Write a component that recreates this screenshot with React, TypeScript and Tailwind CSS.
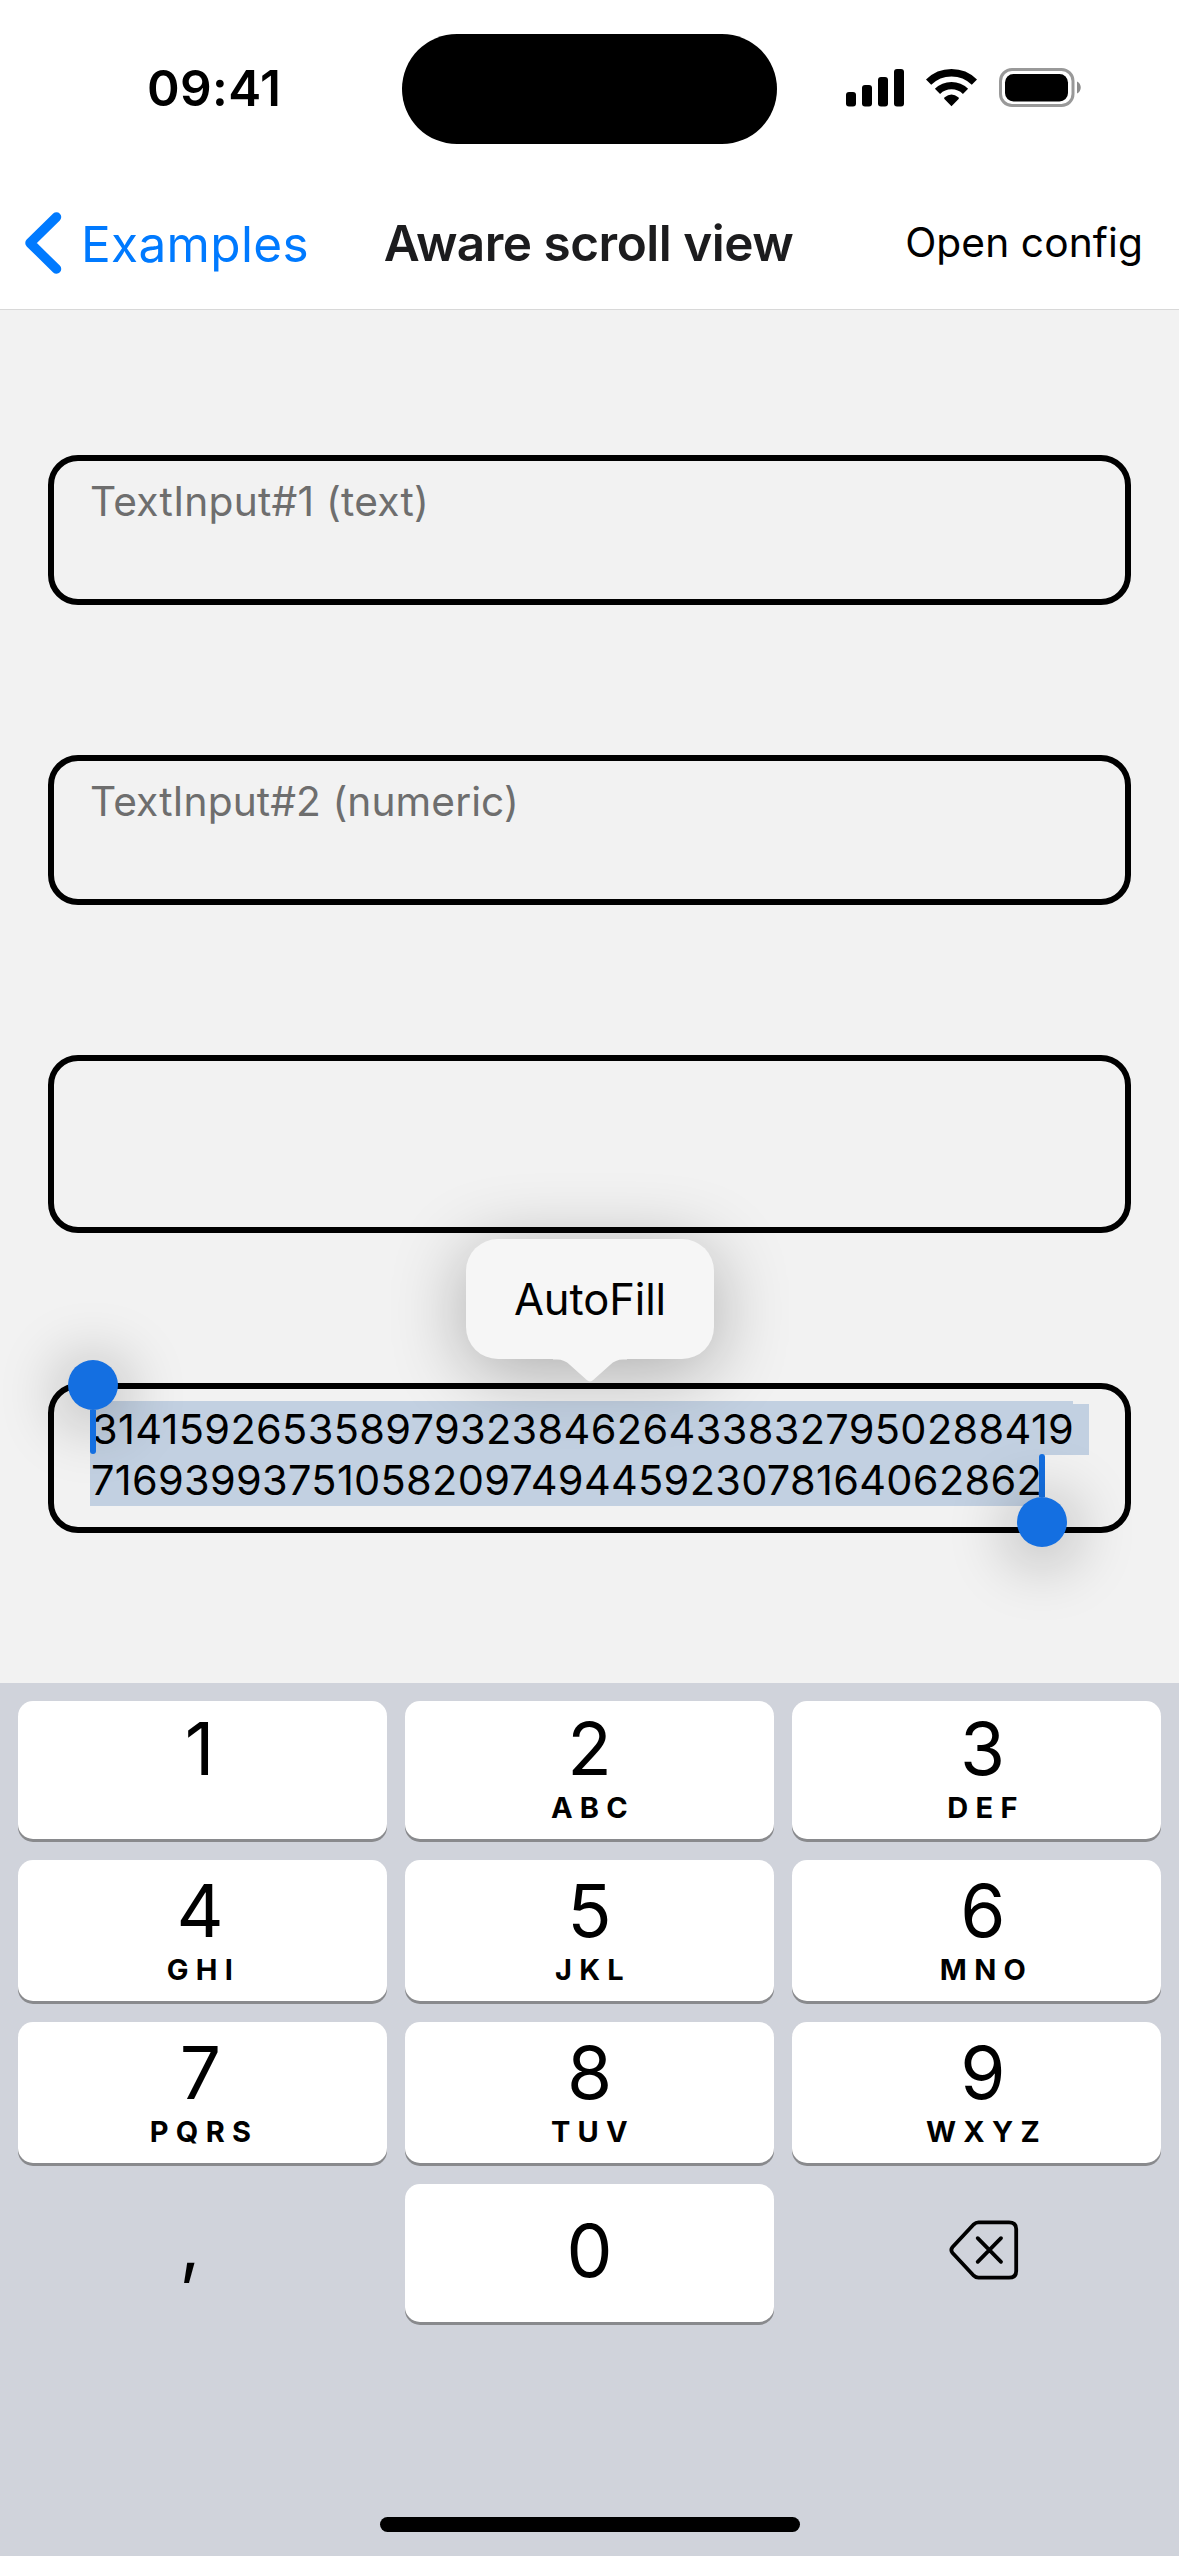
import type { ReactNode } from "react";

const DIGITS_ROW_1 = "314159265358979323846264338327950288419";
const DIGITS_ROW_2 = "71693993751058209749445923078164062862";

function SignalIcon() {
  return (
    <svg width="59" height="38" viewBox="0 0 59 38" fill="black">
      <rect x="0" y="23" width="10" height="14.5" rx="3" />
      <rect x="16" y="16" width="10" height="21.5" rx="3" />
      <rect x="32" y="8" width="10" height="29.5" rx="3" />
      <rect x="48" y="0" width="10" height="37.5" rx="3" />
    </svg>
  );
}

function WifiIcon() {
  return (
    <svg width="51" height="38" viewBox="0 0 51 38" fill="none">
      <path d="M2.6 13.2A32.6 32.6 0 0 1 48.4 13.2" stroke="black" strokeWidth="7.4" />
      <path d="M11.5 22.3A20 20 0 0 1 39.5 22.3" stroke="black" strokeWidth="7.4" />
      <path
        d="M25.5 37.2L18.4 30Q17.6 29 18.7 28.2Q25.5 22.8 32.3 28.2Q33.4 29 32.6 30Z"
        fill="black"
      />
    </svg>
  );
}

function BatteryIcon() {
  return (
    <svg width="83" height="40" viewBox="0 0 83 40">
      <rect x="1.5" y="1.5" width="72.5" height="36" rx="11.5" fill="none" stroke="#999999" strokeWidth="3" />
      <rect x="6" y="6" width="63" height="27.5" rx="8.5" fill="black" />
      <path d="M78 13.5C83 15.5 83 23.5 78 25.5Z" fill="#8c8c8c" />
    </svg>
  );
}

function DeleteIcon() {
  return (
    <svg width="70" height="60" viewBox="0 0 70 60" fill="none" stroke="black" strokeWidth="3.8" strokeLinecap="round" strokeLinejoin="round">
      <path d="M29.5 2.3H60Q67.2 2.3 67.2 9V51Q67.2 57.7 60 57.7H29.5Q26.8 57.7 24.8 55.7L3.6 33Q1.1 30 3.6 27L24.8 4.3Q26.8 2.3 29.5 2.3Z" />
      <path d="M28.7 18.2L52 41.8M52 18.2L28.7 41.8" />
    </svg>
  );
}

function StatusBar() {
  return (
    <div className="grid h-[177px] grid-cols-[402px_375px_402px] items-center bg-white">
      <div className="pb-[2px] pl-[147px] text-[49.5px] leading-[60px] font-semibold tracking-[0.35px]">09:41</div>
      <div className="mt-px h-[110px] rounded-full bg-black" />
      <div className="flex items-center pb-px pl-[69px]">
        <SignalIcon />
        <div className="w-[21px]" />
        <WifiIcon />
        <div className="w-[22px]" />
        <BatteryIcon />
      </div>
    </div>
  );
}

function NavBar() {
  return (
    <div className="grid h-[133px] grid-cols-[1fr_auto_1fr] items-center border-b border-[#d8d8d8] bg-white">
      <div className="flex items-center pl-[24px] text-[#007aff]">
        <svg width="38" height="64" viewBox="0 0 38 64" fill="none">
          <path d="M32.500 6L6 32L32.500 58" stroke="currentColor" strokeWidth="9.5" strokeLinecap="round" strokeLinejoin="round" />
        </svg>
        <span className="pt-px pl-[19px] text-[49.5px] leading-[60px] tracking-[0.35px]">Examples</span>
      </div>
      <div className="pr-[2px] text-[49.5px] leading-[60px] font-semibold tracking-[-0.5px] text-[#1c1c1e]">Aware scroll view</div>
      <div className="pr-[36px] text-right text-[40.7px] leading-[50px] tracking-[0.1px]">Open config</div>
    </div>
  );
}

function Field({ className, children }: { className: string; children?: ReactNode }) {
  return (
    <div className={`relative rounded-[30px] border-[6px] border-black px-[36px] pt-[15px] leading-[51px] whitespace-nowrap ${className}`}>
      {children}
    </div>
  );
}

function Popover() {
  return (
    <div className="absolute top-[-150px] left-[412px] h-[120px] w-[248px] rounded-[32px] bg-[#f6f6f6] text-center text-[43.5px] leading-[120px] tracking-[-0.1px] shadow-[0_12px_75px_rgba(0,0,0,0.3)]">
      AutoFill
      <svg className="absolute top-[119.5px] left-[87px]" width="74" height="23" viewBox="0 0 74 23" fill="#f6f6f6">
        <path d="M0 0H74V0.5H70Q62.500 0.500 57 6L40.500 20.800Q37 24 33.500 20.800L17 6Q11.500 0.500 4 0.500H0Z" />
      </svg>
    </div>
  );
}

function Handle({ className, knobFirst }: { className: string; knobFirst: boolean }) {
  const knob = <div className="h-[50px] w-[50px] rounded-full bg-[#146fe1] shadow-[0_8px_60px_12px_rgba(0,0,0,0.22)]" />;
  return (
    <div className={`absolute flex w-[50px] flex-col items-center ${className}`}>
      {knobFirst && knob}
      <div className={knobFirst ? "h-[44px] w-[6px] rounded-b-[3px] bg-[#146fe1]" : "h-[43px] w-[6px] rounded-t-[3px] bg-[#146fe1]"} />
      {!knobFirst && knob}
    </div>
  );
}

function Form() {
  return (
    <div className="flex h-[1373px] flex-col gap-[150px] bg-[#f2f2f2] px-[48px] pt-[145px]">
      <Field className="h-[150px] text-[40.7px] tracking-[0.23px] text-[#6e6e6e]">TextInput#1 (text)</Field>
      <Field className="h-[150px] text-[40.7px] tracking-[0.08px] text-[#6e6e6e]">TextInput#2 (numeric)</Field>
      <Field className="h-[178px]" />
      <Field className="h-[150px] text-[41.5px] text-black">
        <div className="absolute top-[12px] left-[36px] h-[3px] w-[983px] bg-[#c2d0e1]" />
        <div className="w-[999px] bg-[#c2d0e1] pl-[2px] tracking-[0.34px]">{DIGITS_ROW_1}</div>
        <div className="w-[952px] bg-[#c2d0e1] pl-[1px] tracking-[0.3px]">{DIGITS_ROW_2}</div>
        <Handle className="top-[-29px] left-[14px]" knobFirst />
        <Handle className="top-[65px] left-[963px]" knobFirst={false} />
        <Popover />
      </Field>
    </div>
  );
}

function Key({ digit, letters, className }: { digit: string; letters?: string; className: string }) {
  return (
    <div className={`flex flex-col items-center rounded-[15px] bg-white shadow-[0_3px_0_#898a8d] ${className}`}>
      <div className="h-[78px] text-[73px] leading-[78px]">{digit}</div>
      {letters && <div className="mt-[5px] -mr-[7px] text-[29px] leading-[30px] font-bold tracking-[7.3px]">{letters}</div>}
    </div>
  );
}

function Keyboard() {
  return (
    <div className="flex h-[873px] flex-col bg-[#d0d3db] px-[18px] pt-[18px]">
      <div className="grid grid-cols-3 grid-rows-[138px_141px_141px_138px] gap-x-[18px] gap-y-[21px]">
        <Key digit="1" className="pt-[9px] pr-[6px]" />
        <Key digit="2" letters="ABC" className="pt-[9px]" />
        <Key digit="3" letters="DEF" className="pt-[9px] pl-[12px]" />
        <Key digit="4" letters="GHI" className="pt-[12px] pr-[5px]" />
        <Key digit="5" letters="JKL" className="pt-[12px]" />
        <Key digit="6" letters="MNO" className="pt-[12px] pl-[13px]" />
        <Key digit="7" letters="PQRS" className="pt-[12px] pr-[4px]" />
        <Key digit="8" letters="TUV" className="pt-[12px]" />
        <Key digit="9" letters="WXYZ" className="pt-[12px] pl-[13px]" />
        <div className="pt-[21px] pr-[25px] text-center text-[73px] leading-[78px]">,</div>
        <Key digit="0" className="pt-[28px]" />
        <div className="flex justify-center pt-[36px] pl-[15px]">
          <DeleteIcon />
        </div>
      </div>
      <div className="mx-auto mt-auto mb-[24px] h-[15px] w-[420px] rounded-full bg-black" />
    </div>
  );
}

export default function App() {
  return (
    <div className="flex h-[2556px] w-[1179px] flex-col overflow-hidden font-['Inter',sans-serif] text-black">
      <StatusBar />
      <NavBar />
      <Form />
      <div className="relative">
        <Keyboard />
      </div>
    </div>
  );
}
